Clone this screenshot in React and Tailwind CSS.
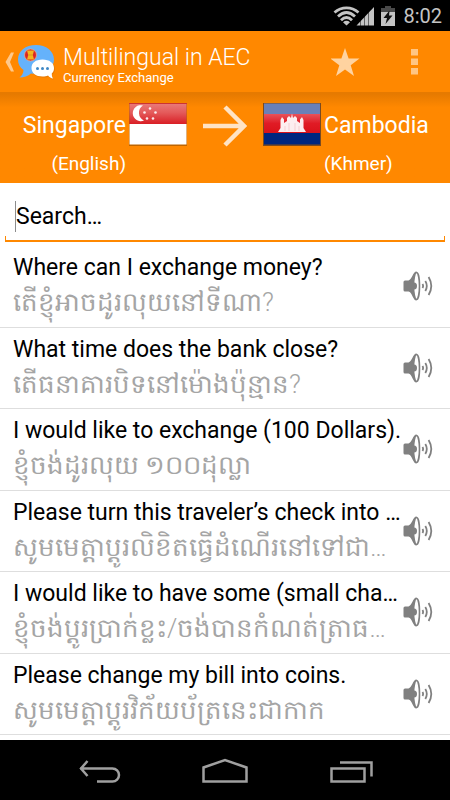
import { useState } from 'react'

const PHRASES = [
  { id: 1, text: 'Where can I exchange money?', khmer: 'តើខ្ញុំអាចដូរលុយនៅទីណា?' },
  { id: 2, text: 'What time does the bank close?', khmer: 'តើធនាគារបិទនៅម៉ោងប៉ុន្មាន?' },
  { id: 3, text: 'I would like to exchange (100 Dollars).', khmer: 'ខ្ញុំចង់ដូរលុយ ១០០ដុល្លា' },
  { id: 4, text: 'Please turn this traveler’s check into …', khmer: 'សូមមេត្តាប្តូរលិខិតធ្វើដំណើរនៅទៅជា…' },
  { id: 5, text: 'I would like to have some (small cha…', khmer: 'ខ្ញុំចង់ប្តូរប្រាក់ខ្លះ/ចង់បានកំណត់ត្រាធ…' },
  { id: 6, text: 'Please change my bill into coins.', khmer: 'សូមមេត្តាប្តូរវិក័យប័ត្រនេះជាកាក' },
]

function StatusBar() {
  return (
    <div className="h-[31px] shrink-0 bg-black flex items-center justify-end gap-2 pr-2 text-[#c4c4c4]">
      <div className="flex items-center gap-[6px]">
        <svg className="w-[42px] h-5" viewBox="0 0 42 20" fill="none">
          {/* Wifi */}
          <g stroke="#c4c4c4" strokeWidth="2.8">
            <path d="M1.500 6.500C8.500 .4 18.500 .4 25.500 6.500" />
            <path d="M5 10.500C10.500 5.300 16.500 5.300 22 10.500" />
            <path d="M8 14.200C11.500 10.700 15.500 10.700 19 14.200" />
          </g>
          <path d="M10 16.200Q13.500 13.400 17 16.200L13.500 19.500Z" fill="#c4c4c4" />
          {/* Signal */}
          <path d="M23.500 19.500L41 1V19.500Z" fill="#c4c4c4" />
          <path d="M27.500 14V20M31.500 10V20M35.500 6V20" stroke="#000" strokeWidth="1" opacity=".5" />
        </svg>
        <svg className="w-[14px] h-5" viewBox="0 0 14 20">
          <path d="M4 0h6v2h4v5H0V2h4z" fill="#4a4a4a" />
          <path d="M0 6h14v14H0z" fill="#c4c4c4" />
          <path d="M8.500 4.500L2.500 12H6L4.500 18L11.500 9.500H8Z" fill="#111" />
        </svg>
      </div>
      <span className="text-[20px] leading-6">8:02</span>
    </div>
  )
}

function ChatLogo() {
  return (
    <svg className="w-[38px] h-[38px]" viewBox="0 0 38 38">
      <path d="M19 2C8.500 2 1 8 1 16.500C1 21 3 24.500 6.500 27C6.500 30 5 32.500 2.500 34.500C7 34.500 11 33 14 30.500C27 32 37 26 37 16.500C37 8 29 2 19 2Z" fill="#65b2fb" />
      <circle cx="13.500" cy="12" r="6" fill="#dc2626" stroke="#f6b27f" strokeWidth=".7" />
      <path d="M10 7.500H17L15.800 12L17 16.500H10L11.200 12Z" fill="#f3b61f" />
      <path d="M11 12H16" stroke="#d98b16" strokeWidth=".7" />
      <path d="M26 17.500C19 17.500 15 21 15 26C15 31 19.500 34.500 26 34.500C28.500 34.500 30 34.200 31.500 33.500C33 35 34.500 36.500 36.500 36.500C35.500 35 35.300 33.500 35.300 31.500C37 30 38 28 38 26C38 21 33 17.500 26 17.500Z" fill="#c76a09" opacity=".45" />
      <path d="M25.500 16.500C18.500 16.500 14.500 20 14.500 25C14.500 30 19 33.500 25.500 33.500C28 33.500 29.500 33.200 31 32.500C32.500 34.200 34 35.200 36 35.500C35 34 34.800 32.500 34.800 30.500C36.500 29 37 27 37 25C37 20 32.500 16.500 25.500 16.500Z" fill="#fff" />
      <g fill="#3f88c5">
        <circle cx="20.500" cy="25.500" r="1.500" />
        <circle cx="25.500" cy="25.500" r="1.500" />
        <circle cx="30.500" cy="25.500" r="1.500" />
      </g>
    </svg>
  )
}

function ActionBar() {
  return (
    <header className="h-[63px] shrink-0 bg-[#ff8800] border-b-2 border-[#e67a00] flex items-center pl-[5px] pr-3 text-white">
      <button type="button" aria-label="Back" className="flex items-center gap-[2px]">
        <svg className="w-[10px] h-5" viewBox="0 0 10 20">
          <path d="M6 .5H9L5 10L9 19.500H6L.5 10Z" fill="#ffc88a" />
        </svg>
        <ChatLogo />
      </button>
      <div className="flex-1 min-w-0 pl-2 pt-1 whitespace-nowrap">
        <h1 className="text-[23px] leading-7 font-light">Multilingual in AEC</h1>
        <p className="text-[13px] leading-3">Currency Exchange</p>
      </div>
      <button type="button" aria-label="Favourite" className="px-4">
        <svg className="w-[30px] h-7" viewBox="0 0 30 28">
          <path d="M14 0L17.600 10.600H28.500L19.700 17.200L23 28L14 21.500L5 28L8.300 17.200L-.5 10.600H10.400Z" fill="#ffd3a0" />
        </svg>
      </button>
      <button type="button" aria-label="More options" className="px-5">
        <svg className="w-[7px] h-[26px] ml-[14px]" viewBox="0 0 7 26" fill="#ffc583">
          <path d="M0 0h7v6.500H0zM0 9.500h7V16H0zM0 19h7v6.500H0z" />
        </svg>
      </button>
    </header>
  )
}

function SingaporeFlag() {
  return (
    <svg className="w-[60px] h-[44px]" viewBox="0 0 60 44">
      <defs>
        <linearGradient id="sgRed" x2="0" y2="1">
          <stop offset="0" stopColor="#ea7c7c" />
          <stop offset=".45" stopColor="#e45b5b" />
          <stop offset="1" stopColor="#d91e25" />
        </linearGradient>
      </defs>
      <rect x="1" y="1" width="58" height="43" fill="#a85a00" opacity=".75" />
      <rect x="1.500" y="1" width="57" height="21" fill="url(#sgRed)" />
      <rect x="1.500" y="22" width="57" height="20.500" fill="#fff" />
      <path d="M1 1.500H59" stroke="#c33" />
      <path d="M15 3.500A8 8 0 1 0 16 18.500A8.500 8.500 0 0 1 15 3.500Z" fill="#fff" />
      <g fill="#fff" opacity=".9">
        <circle cx="22" cy="6.500" r="1.300" />
        <circle cx="16.500" cy="10.500" r="1.300" />
        <circle cx="27.500" cy="10.500" r="1.300" />
        <circle cx="19" cy="16.500" r="1.300" />
        <circle cx="25" cy="16.500" r="1.300" />
      </g>
    </svg>
  )
}

function CambodiaFlag() {
  return (
    <svg className="w-[60px] h-[44px]" viewBox="0 0 60 44">
      <defs>
        <linearGradient id="khRed" x2="0" y2="1">
          <stop offset="0" stopColor="#e8525a" />
          <stop offset=".5" stopColor="#e01b25" />
          <stop offset="1" stopColor="#da121a" />
        </linearGradient>
      </defs>
      <rect x="1" y="1" width="58" height="43" fill="#7a4a20" />
      <rect x="2" y="1.500" width="56" height="11.500" fill="#6a80b8" />
      <rect x="2" y="12" width="56" height="19" fill="url(#khRed)" />
      <rect x="2" y="31" width="56" height="11.500" fill="#00267f" />
      <path d="M16 30L18.500 26V18L20 15L22 17.500V21L25 19V16L27 14L29 16L30 11.500L31 16L33 14L35 16V19L38 21V17.500L40 15L41.500 18V26L44 30Z" fill="#fdeef0" />
      <path d="M23 24V29M27 21V29M33 21V29M37 24V29" stroke="#f3b9c0" strokeWidth=".6" />
    </svg>
  )
}

function LanguageBar() {
  return (
    <section className="h-[89px] shrink-0 bg-[#ff8800] bg-linear-to-b from-[#e67a00] to-[#ff8800] to-15% grid grid-cols-[1fr_auto_1fr] text-white px-1 pt-2">
      <div className="flex justify-end">
        <div className="text-right">
          <p className="text-[23px] leading-[48px]">Singapore</p>
          <p className="text-[19px] leading-7">(English)</p>
        </div>
        <div className="pl-[2px]">
          <SingaporeFlag />
        </div>
      </div>
      <svg className="w-[44px] h-12 mx-[15px]" viewBox="0 0 44 48" fill="none" stroke="#ffe3c4" strokeWidth="4.500">
        <path d="M0 24H41M22 5L41 24L22 43" />
      </svg>
      <div className="flex">
        <CambodiaFlag />
        <div className="pl-[2px]">
          <p className="text-[23px] leading-[48px]">Cambodia</p>
          <p className="text-[19px] leading-7">(Khmer)</p>
        </div>
      </div>
    </section>
  )
}

function SpeakerIcon() {
  return (
    <svg className="w-[30px] h-[30px]" viewBox="0 0 30 30" fill="none">
      <path d="M2 9.500H5.500C9 8.500 10 .5 13.500 .5V29.500C10 29.500 9 21 5.500 20.500H2Q.5 20.500 .5 19V11Q.5 9.500 2 9.500Z" fill="#808080" />
      <ellipse cx="13.500" cy="15" rx="3" ry="13.500" fill="#fff" stroke="#808080" strokeWidth="1.600" />
      <path d="M11 11.500A3 3.500 0 0 1 11 18.500Z" fill="#808080" />
      <path d="M19.500 13Q20.700 15 19.500 17M22.300 10Q25.300 15 22.300 20M25.600 6Q31 15 25.600 24" stroke="#808080" strokeWidth="1.800" />
    </svg>
  )
}

function PhraseRow({ phrase }) {
  return (
    <li className="flex-1 min-h-[81px] border-b border-[#dedede] flex items-center pl-[13px] pr-[17px]">
      <div className="flex-1 min-w-0">
        <p className="text-[23px] leading-8 text-black whitespace-nowrap">{phrase.text}</p>
        <p lang="km" className="text-[26px] leading-9 h-9 font-light text-[#a5a5a5] whitespace-nowrap">{phrase.khmer}</p>
      </div>
      <button type="button" aria-label={`Play ${phrase.text}`} className="shrink-0">
        <SpeakerIcon />
      </button>
    </li>
  )
}

function NavBar() {
  return (
    <nav className="h-[60px] shrink-0 bg-black flex items-center justify-center gap-[80px]">
      <button type="button" aria-label="Back">
        <svg className="w-[46px] h-[26px]" viewBox="0 0 46 26" fill="none" stroke="#a0a0a0" strokeWidth="2.500">
          <path d="M4 11.500H36.500A6 6 0 0 1 36.500 24.500H21M11.500 4L5 11.500L11.500 19" />
        </svg>
      </button>
      <button type="button" aria-label="Home">
        <svg className="w-[46px] h-[26px]" viewBox="0 0 46 26" fill="none" stroke="#a0a0a0" strokeWidth="2.500">
          <path d="M1.500 24.500V10.500L23 3L44.500 10.500V24.500Z" />
        </svg>
      </button>
      <button type="button" aria-label="Recent apps">
        <svg className="w-[46px] h-[26px]" viewBox="0 0 46 26" fill="none" stroke="#a0a0a0" strokeWidth="2.500">
          <path d="M3.500 11.500H36.500V24.500H3.500ZM12 5.500H43.500V19.500" />
        </svg>
      </button>
    </nav>
  )
}

function App() {
  const [query, setQuery] = useState('')

  return (
    <div className="min-h-screen flex flex-col bg-white font-[Roboto,'Noto_Sans',sans-serif]">
      <StatusBar />
      <ActionBar />
      <LanguageBar />
      {/* Search field with bracket underline */}
      <div className="shrink-0 px-[5px] pt-[10px] pb-1">
        <div className="flex items-center h-[46px] pl-[10px]">
          <span className="w-px h-[31px] bg-[#8c8c8c]" />
          <input
            type="text"
            aria-label="Search"
            placeholder="Search…"
            value={query}
            onChange={(e) => setQuery(e.target.value)}
            className="flex-1 min-w-0 h-10 text-[23px] text-black placeholder:text-black outline-none"
          />
        </div>
        <div className="h-[6px] -mt-[3px] border-x border-b-2 border-[#ff8800]" />
      </div>
      <ul className="flex-1 flex flex-col pb-[5px]">
        {PHRASES.map((phrase) => (
          <PhraseRow key={phrase.id} phrase={phrase} />
        ))}
      </ul>
      <NavBar />
    </div>
  )
}

export default App
